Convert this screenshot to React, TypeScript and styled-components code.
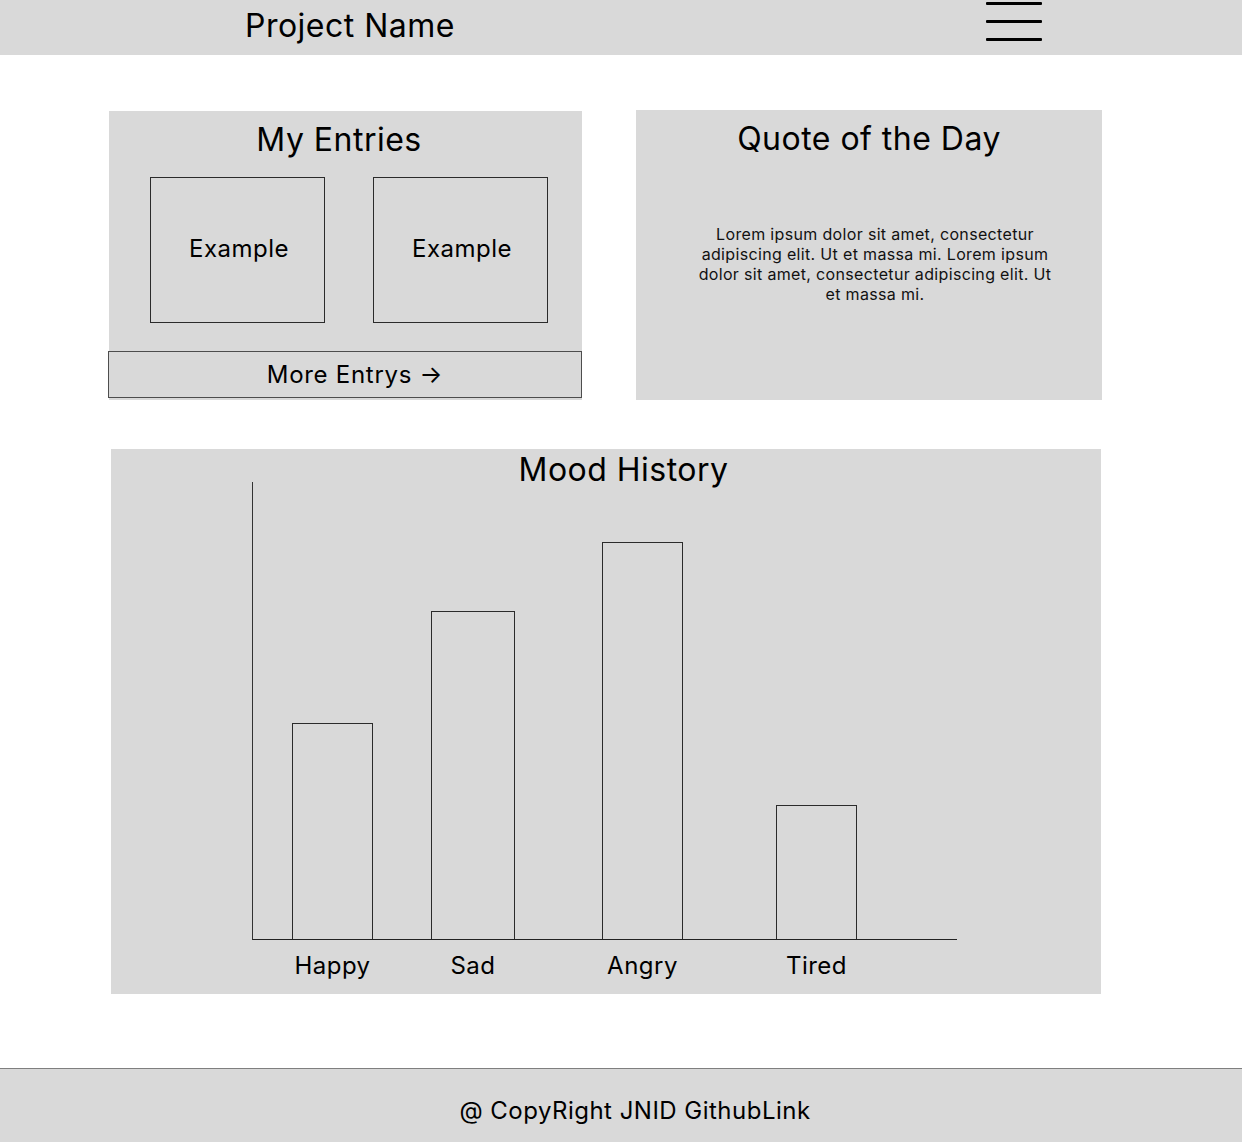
import styled, { createGlobalStyle } from 'styled-components';

const moods = [
    { label: 'Happy', gap: 39, width: 81, height: 216 },
    { label: 'Sad', gap: 58, width: 84, height: 328 },
    { label: 'Angry', gap: 87, width: 81, height: 397 },
    { label: 'Tired', gap: 93, width: 81, height: 134 },
];

const GlobalStyle = createGlobalStyle`
    html, body {
        margin: 0;
        padding: 0;
        background: #ffffff;
        font-family: Inter, "Noto Sans", sans-serif;
        letter-spacing: 0.03em;
        color: #000000;
    }

    * {
        box-sizing: border-box;
    }
`;

export default function App() {
    return (
        <>
            <GlobalStyle />
            <Header>
                <ProjectName>Project Name</ProjectName>
                <MenuButton aria-label="Menu">
                    <MenuLine />
                    <MenuLine />
                    <MenuLine />
                </MenuButton>
            </Header>

            <Main>
                <EntriesCard>
                    <EntriesTitle>My Entries</EntriesTitle>
                    <EntryRow>
                        <EntryBox>Example</EntryBox>
                        <EntryBox>Example</EntryBox>
                    </EntryRow>
                    <MoreButton>More Entrys →</MoreButton>
                </EntriesCard>

                <QuoteCard>
                    <CardTitle>Quote of the Day</CardTitle>
                    <QuoteBody>
                        <QuoteText>
                            Lorem ipsum dolor sit amet, consectetur adipiscing elit. Ut et massa mi. Lorem ipsum dolor
                            sit amet, consectetur adipiscing elit. Ut et massa mi.
                        </QuoteText>
                    </QuoteBody>
                </QuoteCard>

                <MoodCard>
                    <MoodTitle>Mood History</MoodTitle>
                    <Plot>
                        {moods.map((m) => (
                            <Bar key={m.label} $gap={m.gap} $width={m.width} $height={m.height} />
                        ))}
                    </Plot>
                    <LabelRow>
                        {moods.map((m) => (
                            <BarLabel key={m.label} $gap={m.gap} $width={m.width}>
                                {m.label}
                            </BarLabel>
                        ))}
                    </LabelRow>
                </MoodCard>
            </Main>

            <Footer>@ CopyRight JNID GithubLink</Footer>
        </>
    );
}

const Header = styled.header`
    height: 55px;
    background: #d9d9d9;
    display: flex;
    align-items: center;
    justify-content: space-between;
    padding: 0 200px 5px 245px;
`;

const ProjectName = styled.h1`
    margin: 0;
    font-size: 32px;
    font-weight: 400;
    line-height: 39px;
`;

const MenuButton = styled.div`
    align-self: flex-start;
    margin-top: 2px;
    width: 56px;
    display: flex;
    flex-direction: column;
    gap: 15px;
`;

const MenuLine = styled.span`
    display: block;
    height: 3px;
    border-radius: 1px;
    background: #000000;
`;

const Main = styled.main`
    display: grid;
    grid-template-columns: 473px 466px;
    column-gap: 54px;
    row-gap: 49px;
    margin: 56px 0 74px 109px;
    width: 993px;
`;

const Card = styled.section`
    background: #d9d9d9;
    display: flex;
    flex-direction: column;
`;

const CardTitle = styled.h2`
    margin: 9px 0 0;
    font-size: 32px;
    font-weight: 400;
    line-height: 40px;
    text-align: center;
`;

const EntriesCard = styled(Card)`
    height: 289px;
`;

const EntriesTitle = styled(CardTitle)`
    padding-right: 13px;
`;

const EntryRow = styled.div`
    display: flex;
    gap: 48px;
    margin-top: 17px;
    padding-left: 41px;
`;

const EntryBox = styled.div`
    width: 175px;
    height: 146px;
    border: 1px solid #2b2b2b;
    display: flex;
    align-items: center;
    justify-content: center;
    font-size: 24px;
    line-height: 29px;
    padding: 0 0 4px 3px;
`;

const MoreButton = styled.button`
    margin: 28px 0 0 -1px;
    width: calc(100% + 1px);
    height: 47px;
    border: 1px solid #4d4d4d;
    background: transparent;
    font-family: Inter, "Noto Sans", sans-serif;
    font-size: 24px;
    letter-spacing: 0.03em;
    color: #000000;
    padding: 0 0 0 20px;
    cursor: pointer;
`;

const QuoteCard = styled(Card)`
    height: 290px;
    margin-top: -1px;
`;

const QuoteBody = styled.div`
    flex: 1;
    display: flex;
    align-items: center;
    justify-content: center;
    padding: 0 0 32px 12px;
`;

const QuoteText = styled.p`
    margin: 0;
    width: 362px;
    font-size: 16px;
    line-height: 20px;
    letter-spacing: 0.021em;
    text-align: center;
    color: #111111;
`;

const MoodCard = styled(Card)`
    grid-column: 1 / -1;
    margin-left: 2px;
    width: 990px;
    height: 545px;
    padding: 5px 0 0 141px;
`;

const MoodTitle = styled.h2`
    margin: 0 0 -4px;
    font-size: 32px;
    font-weight: 400;
    line-height: 32px;
    text-align: center;
    padding: 0 106px 0 0;
    position: relative;
    z-index: 1;
`;

const Plot = styled.div`
    width: 705px;
    height: 458px;
    border-left: 1px solid #333333;
    border-bottom: 1px solid #222222;
    display: flex;
    align-items: flex-end;
`;

const Bar = styled.div<{ $gap: number; $width: number; $height: number }>`
    flex: none;
    margin-left: ${({ $gap }) => $gap}px;
    width: ${({ $width }) => $width}px;
    height: ${({ $height }) => $height}px;
    border: 1px solid #2b2b2b;
    border-bottom: none;
`;

const LabelRow = styled.div`
    display: flex;
    padding-left: 1px;
    margin-top: 11px;
`;

const BarLabel = styled.span<{ $gap: number; $width: number }>`
    flex: none;
    margin-left: ${({ $gap }) => $gap}px;
    width: ${({ $width }) => $width}px;
    font-size: 24px;
    line-height: 29px;
    text-align: center;
    white-space: nowrap;
`;

const Footer = styled.footer`
    height: 75px;
    background: #d9d9d9;
    border-top: 1px solid #7f7f7f;
    display: flex;
    align-items: center;
    justify-content: center;
    padding: 9px 0 0 28px;
    font-size: 24px;
    line-height: 29px;
`;
